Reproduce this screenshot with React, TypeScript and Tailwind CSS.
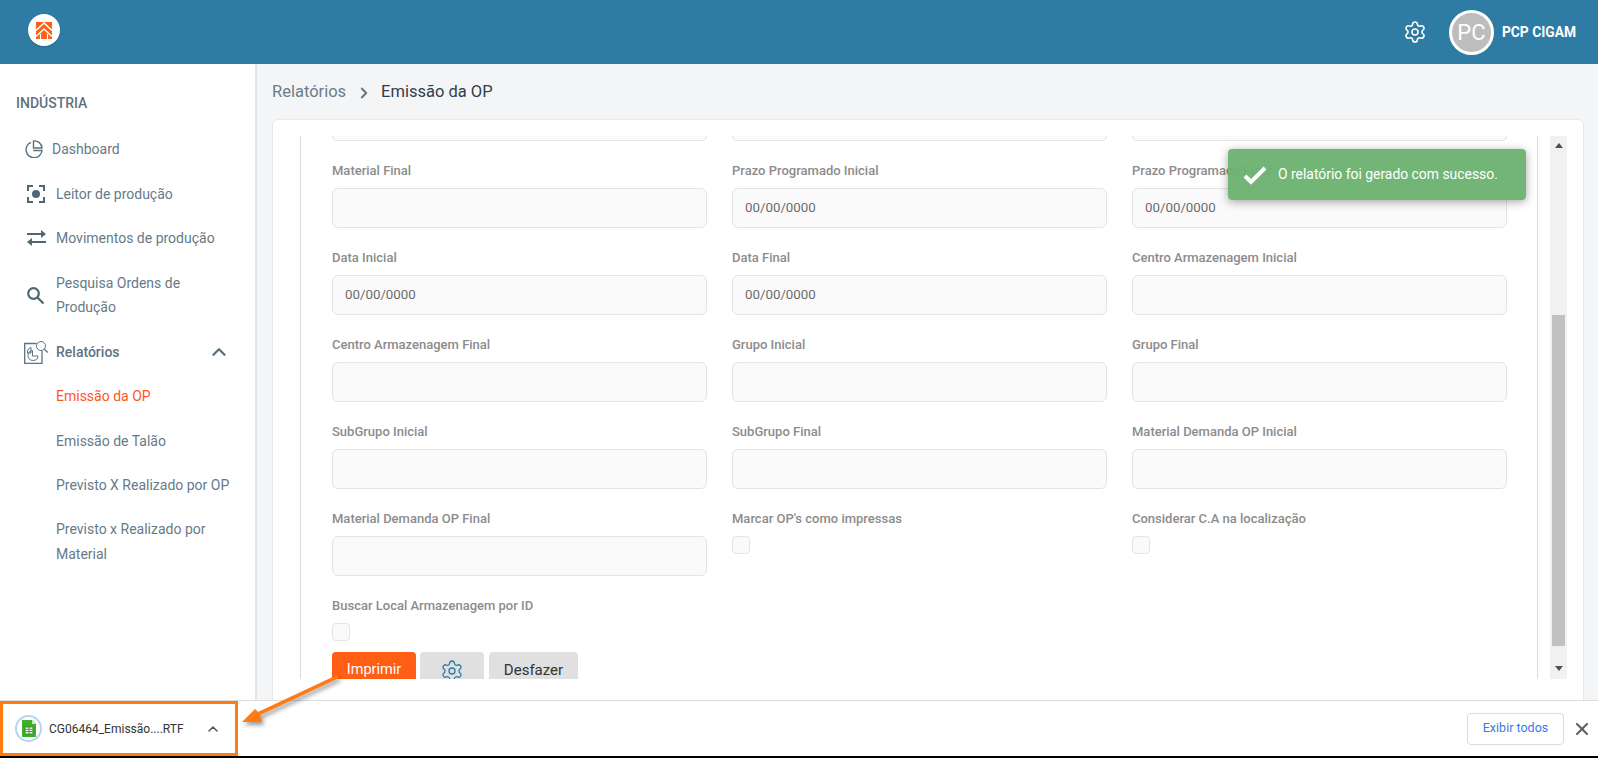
import { ChevronRight, ChevronUp, Settings, X } from "lucide-react";

const fieldRows = [
  [
    { label: "Material Final" },
    { label: "Prazo Programado Inicial", value: "00/00/0000" },
    { label: "Prazo Programado Final", value: "00/00/0000" },
  ],
  [
    { label: "Data Inicial", value: "00/00/0000" },
    { label: "Data Final", value: "00/00/0000" },
    { label: "Centro Armazenagem Inicial" },
  ],
  [
    { label: "Centro Armazenagem Final" },
    { label: "Grupo Inicial" },
    { label: "Grupo Final" },
  ],
  [
    { label: "SubGrupo Inicial" },
    { label: "SubGrupo Final" },
    { label: "Material Demanda OP Inicial" },
  ],
];

const Logo = () => (
  <div className="mb-1 ml-7 flex h-8 w-8 items-center justify-center rounded-full bg-white shadow-sm">
    <svg width="16" height="17" viewBox="0 0 16 17">
      <path d="M0 0h16v17H0z" fill="#ff5e14" />
      <path d="M0 8.500 8 1l8 7.500M0 14.500 8 7l8 7.500" fill="none" stroke="#fff" strokeWidth="1.6" />
      <path d="M5.500 17v-4.500h5V17" fill="#ff5e14" />
      <path d="M4.500 12v5M11.500 12v5" stroke="#fff" strokeWidth="1.2" />
    </svg>
  </div>
);

const PieIcon = () => (
  <svg width="18" height="18" viewBox="0 0 18 18" fill="none" stroke="#5c7280" strokeWidth="1.4">
    <path d="M6 2.300a8 8 0 1 0 11 8.200H8.200" />
    <path d="M8.500 1v7h8.500a7.500 7.500 0 0 0-8.500-7z" />
  </svg>
);

const ScanIcon = () => (
  <svg width="18" height="18" viewBox="0 0 18 18" fill="none" stroke="#4f6674" strokeWidth="2">
    <path d="M1 6V1h5M12 1h5v5M17 12v5h-5M6 17H1v-5" />
    <circle cx="9" cy="9" r="4" fill="#4f6674" stroke="none" />
  </svg>
);

const SwapIcon = () => (
  <svg width="19" height="16" viewBox="0 0 19 16" fill="#4f6674">
    <path d="M0 3h14V0l5 4-5 4V5H0z" />
    <path d="M19 11H5V8l-5 4 5 4v-3h14z" />
  </svg>
);

const SearchIcon = () => (
  <svg width="17" height="17" viewBox="0 0 17 17" fill="none" stroke="#4f6674" strokeWidth="2.2">
    <circle cx="6.500" cy="6.500" r="5.300" />
    <path d="m10.500 10.500 6 6" />
  </svg>
);

const ReportIcon = () => (
  <svg width="24" height="24" viewBox="0 0 24 24" fill="none" stroke="#5c7280" strokeWidth="1">
    <path d="M12.500 3.500H.700V23.500H18V11" strokeWidth="1.300" />
    <path d="M8.500 10.500a5 5 0 1 0 5.500 5.500H8.500z" />
    <path d="M3.500 13v-2a5 5 0 0 1 3.500-3.500V13z" />
    <circle cx="17" cy="6" r="4.500" />
    <path d="m20.300 9.200 3.500 3.300" strokeWidth="1.300" />
  </svg>
);

const SpreadsheetIcon = () => (
  <div className="flex h-[27px] w-[27px] items-center justify-center rounded-full border-2 border-[#b7d3f5] bg-white">
    <svg width="14" height="17" viewBox="0 0 14 17">
      <path d="M0 0h10l4 4v13H0z" fill="#3fae2a" />
      <path d="M10 0v4h4z" fill="#c6ebbb" />
      <path d="M3 7h8v7H3z" fill="#fff" />
      <path d="M3 7h8M3 9.300h8M3 11.600h8M3 14h8M3 7v7M7 7v7M11 7v7" stroke="#2c8a1c" strokeWidth=".9" />
    </svg>
  </div>
);

const Field = ({ label, value }: { label: string; value?: string }) => (
  <div>
    <div className="h-5 text-[13px] leading-5 font-medium text-[#8c8c8c]">{label}</div>
    <div className="mt-[7px] flex h-10 items-center rounded-md border border-[#e4e4e4] bg-[#fafafa] px-3 text-[13.3px] text-[#6b6b6b]">
      {value}
    </div>
  </div>
);

const CheckField = ({ label }: { label: string }) => (
  <div>
    <div className="h-5 text-[13px] leading-5 font-medium text-[#8c8c8c]">{label}</div>
    <div className="mt-[7px] h-[18px] w-[18px] rounded border border-[#e4e4e4] bg-[#fafafa]" />
  </div>
);

export default function App() {
  return (
    <div className="relative flex h-[758px] w-[1598px] flex-col overflow-hidden font-['Roboto',sans-serif]">
      {/* Header */}
      <header className="flex h-16 shrink-0 items-center bg-[#2e7ba3]">
        <Logo />
        <div className="ml-auto flex items-center">
          <Settings size={24} strokeWidth={1.6} className="text-white" />
          <div className="ml-[22px] flex h-[45px] w-[45px] items-center justify-center rounded-full border-[3px] border-white bg-[#bdbdbd] text-[22px] text-white">
            PC
          </div>
          <span className="mr-[22px] ml-2 text-[13.8px] font-bold text-white">PCP CIGAM</span>
        </div>
      </header>

      <div className="flex min-h-0 flex-1">
        {/* Sidebar */}
        <aside className="w-[257px] shrink-0 border-r-2 border-[#e2e4e6] bg-white text-sm text-[#667a88]">
          <div className="mt-[29px] pl-4 text-sm leading-5 font-medium text-[#5f7280]">INDÚSTRIA</div>
          <div className="mt-[26px] flex h-5 items-center pl-[25px]">
            <PieIcon />
            <span className="ml-[9px]">Dashboard</span>
          </div>
          <div className="mt-[25px] flex h-5 items-center pl-[27px]">
            <ScanIcon />
            <span className="ml-[11px]">Leitor de produção</span>
          </div>
          <div className="mt-6 flex h-5 items-center pl-[27px]">
            <SwapIcon />
            <span className="ml-[10px]">Movimentos de produção</span>
          </div>
          <div className="mt-[23px] flex items-center pl-[27px]">
            <SearchIcon />
            <span className="ml-[12px] w-[150px] leading-6">Pesquisa Ordens de Produção</span>
          </div>
          <div className="mt-[23px] flex h-5 items-center pl-6">
            <ReportIcon />
            <span className="ml-[8px] font-medium text-[#5f7280]">Relatórios</span>
            <ChevronUp size={22} strokeWidth={2.6} className="mr-[25px] ml-auto text-[#5c7280]" />
          </div>
          <div className="mt-6 flex flex-col gap-[24.5px] pl-[56px] leading-5">
            <span className="text-[#ff5722]">Emissão da OP</span>
            <span>Emissão de Talão</span>
            <span>Previsto X Realizado por OP</span>
          </div>
          <div className="mt-[22px] w-[230px] pl-[56px] leading-[25px]">Previsto x Realizado por Material</div>
        </aside>

        {/* Main */}
        <main className="min-w-0 flex-1 overflow-hidden bg-[#f4f5f7] pr-[14px] pl-[15px]">
          <div className="flex h-[55px] items-center pt-[2px] text-[16.5px]">
            <span className="text-[#6b7d8a]">Relatórios</span>
            <ChevronRight size={18} strokeWidth={2.4} className="mr-2 ml-[9px] text-[#5f7280]" />
            <span className="text-[#2f3e4a]">Emissão da OP</span>
          </div>
          <div className="flex h-[600px] rounded-md border border-[#e8e9eb] bg-white pt-4 pr-4 pl-[27px]">
            <div className="h-[543px] w-[1239px] overflow-hidden border-x border-[#dcdcdc] pr-[30px] pl-[31px]">
              <div className="grid h-[5px] grid-cols-3 gap-[25px]">
                <div className="rounded-b-md border-x border-b border-[#e4e4e4] bg-[#fafafa]" />
                <div className="rounded-b-md border-x border-b border-[#e4e4e4] bg-[#fafafa]" />
                <div className="rounded-b-md border-x border-b border-[#e4e4e4] bg-[#fafafa]" />
              </div>
              <div className="mt-5 grid grid-cols-3 gap-x-[25px] gap-y-5">
                {fieldRows.flat().map((field) => (
                  <Field key={field.label} label={field.label} value={field.value} />
                ))}
                <Field label="Material Demanda OP Final" />
                <CheckField label="Marcar OP's como impressas" />
                <CheckField label="Considerar C.A na localização" />
                <CheckField label="Buscar Local Armazenagem por ID" />
              </div>
              <div className="mt-[11px] flex gap-1">
                <button className="h-[36px] w-[84px] rounded-t bg-[#ff5e14] text-[14.5px] text-white">Imprimir</button>
                <button className="flex h-[38px] w-[64px] items-center justify-center rounded-t bg-[#e0e0e0]">
                  <Settings size={24} strokeWidth={1.3} className="text-[#2e7ba3]" />
                </button>
                <button className="ml-px h-[36px] w-[89px] rounded-t bg-[#e0e0e0] text-[15px] text-[#333]">Desfazer</button>
              </div>
            </div>
            {/* Scrollbar */}
            <div className="ml-[12px] flex h-[543px] w-[17px] flex-col items-center bg-[#f1f1f1]">
              <div className="mt-[7px] h-0 w-0 border-x-[4px] border-b-[5px] border-x-transparent border-b-[#505050]" />
              <div className="mt-[167px] h-[331px] w-[13px] bg-[#c1c1c1]" />
              <div className="mt-[20px] h-0 w-0 border-x-[4px] border-t-[5px] border-x-transparent border-t-[#505050]" />
            </div>
          </div>
        </main>
      </div>

      {/* Download bar */}
      <footer className="flex h-[58px] shrink-0 items-center border-t border-b-2 border-t-[#dcdcdc] border-b-black bg-white">
        <div className="ml-[15px] flex items-center">
          <SpreadsheetIcon />
          <span className="ml-[7px] text-xs text-[#333]">CG06464_Emissão....RTF</span>
          <ChevronUp size={16} strokeWidth={2.2} className="ml-[21px] text-[#555]" />
        </div>
        <button className="ml-auto h-8 w-[97px] rounded border border-[#dadce0] text-[12.5px] text-[#3b78e7]">
          Exibir todos
        </button>
        <X size={20} strokeWidth={2.6} className="mr-[6px] ml-[8px] text-[#5f6368]" />
      </footer>

      {/* Success toast */}
      <div className="absolute top-[149px] left-[1228px] flex h-[51px] w-[298px] items-center rounded-sm bg-[#6cb16f]/95 pl-[15px] text-[13.9px] text-white shadow-[0_2px_10px_rgba(0,0,0,0.35)]">
        <svg width="24" height="20" viewBox="0 0 24 20" fill="none" stroke="#fff" strokeWidth="4">
          <path d="m2 11 6 6L22 3" />
        </svg>
        <span className="ml-[11px]">O relatório foi gerado com sucesso.</span>
      </div>

      {/* Annotation around the download item */}
      <div className="absolute top-[701px] left-0 h-[55px] w-[238px] border-[3px] border-[#ff7a12]" />
      <svg
        className="absolute top-[665px] left-[235px] drop-shadow-[2px_3px_2px_rgba(0,0,0,0.4)]"
        width="120"
        height="70"
        viewBox="0 0 120 70"
        fill="#ff7a12"
      >
        <path d="M7 57 20 44 23 47 102 10 104 13 25 50 27 57z" />
      </svg>
    </div>
  );
}
